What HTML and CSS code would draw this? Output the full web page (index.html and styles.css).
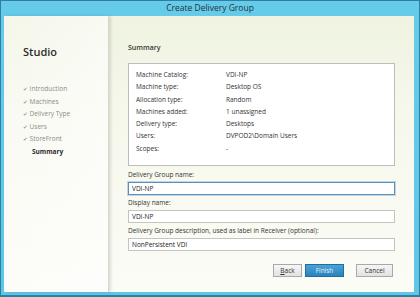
FILE: index.html
```html
<!DOCTYPE html>
<html lang="en">
<head>
    <meta charset="UTF-8">
    <title>Create Delivery Group</title>
    <link rel="stylesheet" href="styles.css">
</head>
<body>
    <div class="window">
        <div class="titlebar">Create Delivery Group</div>
        <div class="client">
            <aside class="sidebar">
                <h1>Studio</h1>
                <ul class="steps">
                    <li class="done">Introduction</li>
                    <li class="done">Machines</li>
                    <li class="done">Delivery Type</li>
                    <li class="done">Users</li>
                    <li class="done">StoreFront</li>
                    <li class="current">Summary</li>
                </ul>
            </aside>
            <main class="main">
                <h2>Summary</h2>
                <div class="summary">
                    <div class="row"><span class="key">Machine Catalog:</span><span>VDI-NP</span></div>
                    <div class="row"><span class="key">Machine type:</span><span>Desktop OS</span></div>
                    <div class="row"><span class="key">Allocation type:</span><span>Random</span></div>
                    <div class="row"><span class="key">Machines added:</span><span>1 unassigned</span></div>
                    <div class="row"><span class="key">Delivery type:</span><span>Desktops</span></div>
                    <div class="row"><span class="key">Users:</span><span>DVPOD2\Domain Users</span></div>
                    <div class="row"><span class="key">Scopes:</span><span>-</span></div>
                </div>
                <label class="field">
                    <span>Delivery Group name:</span>
                    <input class="focused" type="text" value="VDI-NP">
                </label>
                <label class="field">
                    <span>Display name:</span>
                    <input type="text" value="VDI-NP">
                </label>
                <label class="field">
                    <span>Delivery Group description, used as label in Receiver (optional):</span>
                    <input type="text" value="NonPersistent VDI">
                </label>
                <div class="buttons">
                    <button class="btn"><u>B</u>ack</button>
                    <button class="btn primary">Finish</button>
                    <button class="btn cancel">Cancel</button>
                </div>
            </main>
        </div>
    </div>
</body>
</html>
```

FILE: styles.css
```css
* {
    box-sizing: border-box;
    margin: 0;
    padding: 0;
}
body {
    font-family: 'Open Sans', 'Noto Sans', sans-serif;
    color: #333;
    background: #2d6f8c;
}
.window {
    width: 420px;
    height: 297px;
    display: flex;
    flex-direction: column;
    background: linear-gradient(180deg, #66cbe9 0%, #5fc6e6 100%);
    border: 1px solid #2f7fa3;
    border-bottom-width: 2px;
}
.titlebar {
    height: 15px;
    line-height: 14px;
    text-align: center;
    font-size: 8.5px;
    color: #1d3440;
}
.client {
    flex: 1;
    display: flex;
    margin: 0 5px 3px 3px;
    background: linear-gradient(180deg, #eff3e0 0%, #f6f8ec 35%, #fbfcf6 100%);
}
.sidebar {
    width: 105px;
    flex-shrink: 0;
    padding: 28px 0 0 19px;
    border-right: 1px solid #d6d8d0;
    box-shadow: 2px 0 3px rgba(0, 0, 0, 0.12);
    background: linear-gradient(90deg, rgba(255,255,255,0.3) 0%, rgba(255,255,255,0.6) 100%);
}
.sidebar h1 {
    font-size: 11px;
    font-weight: 600;
    color: #2b2b2b;
    margin-bottom: 24px;
}
.steps {
    list-style: none;
    font-size: 6.5px;
}
.steps li {
    height: 12.6px;
    line-height: 12px;
    color: #8a8d88;
}
.steps li.done::before {
    content: "\2714";
    font-family: 'DejaVu Sans', sans-serif;
    font-size: 5.5px;
    color: #9aa39a;
    margin-right: 2px;
}
.steps li.current {
    font-weight: 700;
    color: #2b2b2b;
    padding-left: 9px;
}
.main {
    flex: 1;
    padding: 26px 19px 0 19px;
    display: flex;
    flex-direction: column;
}
.main > * {
    flex-shrink: 0;
}
.main h2 {
    font-size: 7px;
    font-weight: 600;
    color: #333;
    height: 12px;
    line-height: 12px;
    margin-bottom: 9px;
}
.summary {
    height: 103px;
    background: #fff;
    border: 1px solid #bdbdbd;
    padding: 5px 7px;
    font-size: 6.5px;
    color: #333;
    margin-bottom: 1px;
}
.row {
    display: flex;
    height: 12.3px;
    line-height: 12px;
}
.key {
    width: 90px;
}
.field {
    display: flex;
    flex-direction: column;
    font-size: 6.5px;
    color: #333;
}
.field span {
    height: 15px;
    line-height: 16px;
}
.field input {
    font-family: inherit;
    font-size: 6.5px;
    height: 13px;
    padding: 0 3px;
    border: 1px solid #c4c4c4;
    background: #fff;
    color: #222;
    outline: none;
}
.field input.focused {
    border-color: #5a8fbf;
    box-shadow: 0 0 0 1px rgba(120, 170, 215, 0.45);
}
.buttons {
    display: flex;
    justify-content: flex-end;
    gap: 3px;
    margin-top: 13px;
}
.btn {
    font-family: inherit;
    font-size: 6.5px;
    height: 13px;
    width: 29px;
    border: 1px solid #a9a9a9;
    background: linear-gradient(180deg, #f6f6f6 0%, #e2e2e2 100%);
    color: #333;
}
.btn.primary {
    width: 39px;
    border-color: #1f6e9e;
    background: linear-gradient(180deg, #4aa3d6 0%, #2a84bc 100%);
    color: #e8f4fb;
}
.btn.cancel {
    width: 37px;
    margin-left: 9px;
    margin-right: 2px;
}
```
